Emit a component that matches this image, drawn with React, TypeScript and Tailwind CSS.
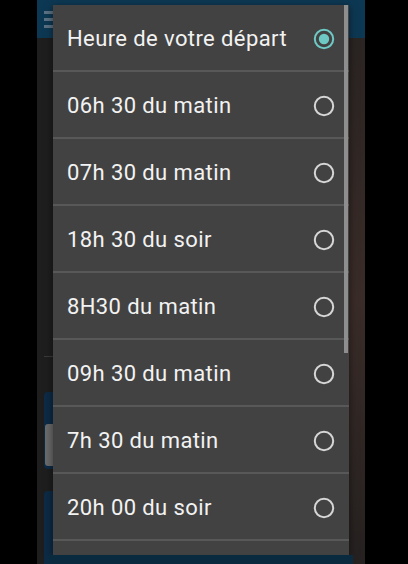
import { useState } from 'react';

const options = [
    "Heure de votre départ",
    "06h 30 du matin",
    "07h 30 du matin",
    "18h 30 du soir",
    "8H30 du matin",
    "09h 30 du matin",
    "7h 30 du matin",
    "20h 00 du soir",
];

function Radio({ checked }: { checked: boolean }) {
    return (
        <svg width="22" height="22" viewBox="0 0 22 22" className="shrink-0">
            {checked ? (
                <>
                    <circle cx="11" cy="11" r="9.2" fill="none" stroke="#6ec8c4" strokeWidth="2" />
                    <circle cx="11" cy="11" r="5.2" fill="#6ec8c4" />
                </>
            ) : (
                <circle cx="11" cy="11" r="9.2" fill="none" stroke="#d6d6d6" strokeWidth="2" />
            )}
        </svg>
    );
}

export default function App() {
    const [selected, setSelected] = useState(0);

    return (
        <div className="relative w-[408px] h-[564px] bg-black overflow-hidden" style={{ fontFamily: 'Roboto, "Noto Sans", sans-serif' }}>
            {/* dimmed app behind the dialog */}
            <div className="ml-[37px] w-[328px] h-full flex flex-col bg-[#1e1e1e]">
                <div className="h-[38px] bg-[#0d3853] shrink-0 flex items-center px-[7px]">
                    <div className="flex flex-col gap-[4px]">
                        <div className="w-[9px] h-[3px] bg-[#5b7183]" />
                        <div className="w-[9px] h-[3px] bg-[#5b7183]" />
                        <div className="w-[9px] h-[3px] bg-[#5b7183]" />
                    </div>
                </div>
                <div className="flex flex-1">
                    <div className="flex-1 flex flex-col">
                        <div className="h-[318px]" />
                        <div className="ml-[7px] h-px bg-[#3a3a3a]" />
                        <div className="h-[35px]" />
                        <div className="ml-[7px] mr-[-11px] h-[77px] rounded-[4px] bg-[#0d2b45] flex flex-col justify-end pb-[3px]">
                            <div className="ml-[1px] mr-[3px] h-[42px] rounded-[3px] bg-[#6a6a6a]" />
                        </div>
                        <div className="h-[22px]" />
                        <div className="ml-[7px] mr-[-11px] flex-1 rounded-t-[4px] bg-[#0d2b45]" />
                    </div>
                    <div className="w-[16px] bg-gradient-to-b from-[#2a2422] via-[#3a2c28] to-[#252120]" />
                </div>
            </div>

            {/* dialog */}
            <div className="absolute left-[53px] top-[5px] w-[296px] h-[550px] bg-[#424242] shadow-[0_2px_8px_rgba(0,0,0,0.5)] overflow-hidden">
                <div className="flex flex-col">
                    {options.map((opt, i) => (
                        <button
                            key={i}
                            type="button"
                            onClick={() => setSelected(i)}
                            className="h-[67px] shrink-0 flex items-center justify-between pl-[14px] pr-[14px] pt-[3px] border-b-[2px] border-[#585858] text-left"
                        >
                            <span className="text-[22px] leading-none tracking-[0.4px] text-[#f2f2f2]">{opt}</span>
                            <Radio checked={selected === i} />
                        </button>
                    ))}
                </div>
                <div className="absolute right-[1px] top-0 w-[4px] h-[348px] bg-[#8e8e8e]" />
            </div>
            <div className="absolute left-[49px] top-[555px] w-[304px] h-[12px] bg-[#0a2a40]" />
        </div>
    );
}
